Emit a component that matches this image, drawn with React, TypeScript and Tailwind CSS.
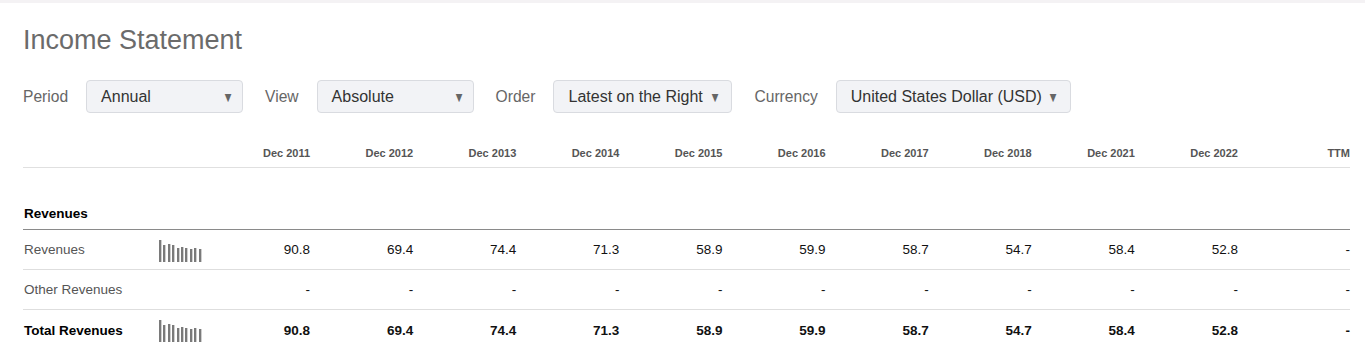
import React from "react";

const periods = [
  "Dec 2011",
  "Dec 2012",
  "Dec 2013",
  "Dec 2014",
  "Dec 2015",
  "Dec 2016",
  "Dec 2017",
  "Dec 2018",
  "Dec 2021",
  "Dec 2022",
];

const revenues = [90.8, 69.4, 74.4, 71.3, 58.9, 59.9, 58.7, 54.7, 58.4, 52.8];

const filters = [
  { label: "Period", value: "Annual", width: "w-[157px]", pr: "pr-[7px]" },
  { label: "View", value: "Absolute", width: "w-[157px]", pr: "pr-[7px]" },
  { label: "Order", value: "Latest on the Right", width: "w-[179px]", pr: "pr-[10px]" },
  { label: "Currency", value: "United States Dollar (USD)", width: "w-[235px]", pr: "pr-[10px]" },
];

const grid = "grid grid-cols-[136px_48px_repeat(10,103.1px)_1fr]";

function Sparkline({ values }: { values: number[] }) {
  const max = Math.max(...values);
  return (
    <div className="flex items-end gap-[2.4px] h-[22px]">
      {values.map((v, i) => (
        <div
          key={i}
          className="w-[2px] bg-[#7a7a7a] shadow-[1px_0_0_#cfcfcf]"
          style={{ height: `${Math.round((v / max) * 22)}px` }}
        />
      ))}
    </div>
  );
}

function Row({
  label,
  values,
  bold,
  chart,
  last,
}: {
  label: string;
  values: (number | null)[];
  bold?: boolean;
  chart?: boolean;
  last?: boolean;
}) {
  const text = bold ? "font-bold text-black" : "text-[#555]";
  return (
    <div className={`${grid} h-[40px] items-center pt-[2px] ${last ? "" : "border-b border-[#dedede]"}`}>
      <div className={`pl-[1px] text-[13.5px] ${text}`}>{label}</div>
      <div className="flex items-center">{chart && <Sparkline values={revenues} />}</div>
      {values.map((v, i) => (
        <div key={i} className={`text-right text-[13.5px] ${bold ? "font-bold" : ""} text-[#111]`}>
          {v === null ? "-" : v.toFixed(1)}
        </div>
      ))}
      <div className={`text-right text-[13.5px] ${bold ? "font-bold" : ""} text-[#111]`}>-</div>
    </div>
  );
}

export default function App() {
  return (
    <div className="min-h-[347px] bg-white font-['Liberation_Sans',Arial,sans-serif]">
      <div className="h-[3px] bg-[#f4f2f4]" />
      <div className="pl-[23px] pr-[15px]">
        <h1 className="pt-[21px] text-[27px] leading-[32px] text-[#6b6b6b]">Income Statement</h1>

        <div className="mt-[24px] flex items-center">
          {filters.map((f, i) => (
            <div key={f.label} className={`flex items-center ${i > 0 ? "ml-[22px]" : ""}`}>
              <span className="text-[15.6px] text-[#666]">{f.label}</span>
              <div
                className={`ml-[18px] flex h-[33px] ${f.width} items-center justify-between rounded-[4px] border border-[#d9dbe0] bg-[#f2f3f6] pl-[14px] ${f.pr}`}
              >
                <span className="text-[16px] text-[#333]">{f.value}</span>
                <span className="text-[14px] leading-none text-[#666] scale-x-[0.8]">▼</span>
              </div>
            </div>
          ))}
        </div>

        <div className="mt-[26px]">
          <div className={`${grid} h-[29px] items-end border-b border-[#e0e0e0] pb-[7px]`}>
            <div />
            <div />
            {periods.map((p) => (
              <div key={p} className="text-right text-[11px] leading-[13px] font-bold text-[#555]">
                {p}
              </div>
            ))}
            <div className="text-right text-[11px] leading-[13px] font-bold text-[#555]">TTM</div>
          </div>

          <div className="flex h-[62px] items-end border-b border-[#8a8a8a] pb-[7px]">
            <span className="pl-[1px] text-[13.5px] leading-[16px] font-bold text-black">Revenues</span>
          </div>

          <Row label="Revenues" values={revenues} chart />
          <Row label="Other Revenues" values={revenues.map(() => null)} />
          <Row label="Total Revenues" values={revenues} bold chart last />
        </div>
      </div>
    </div>
  );
}
